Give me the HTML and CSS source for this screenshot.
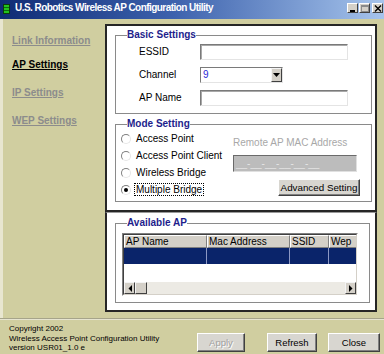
FILE: index.html
```html
<!DOCTYPE html>
<html>
<head>
<meta charset="utf-8">
<link rel="stylesheet" href="styles.css">
</head>
<body>
<div class="window">
  <div class="titlebar">
    <svg class="appicon" width="7" height="10" viewBox="0 0 7 10">
      <rect x="0.5" y="0.5" width="6" height="9" fill="#22c41e" stroke="#0b3d0b"/>
      <rect x="1" y="3" width="5" height="1" fill="#0e6a0e"/>
      <rect x="1" y="6" width="5" height="1" fill="#0e6a0e"/>
    </svg>
    <span class="title">U.S. Robotics Wireless AP Configuration Utility</span>
    <div class="ctrls">
      <span class="cbtn"><svg width="8" height="7" viewBox="0 0 8 7"><rect x="1" y="5" width="5" height="2" fill="#000"/></svg></span>
      <span class="cbtn"><svg width="8" height="7" viewBox="0 0 8 7"><rect x="0.5" y="0.5" width="7" height="6" fill="none" stroke="#8a8a8a"/><rect x="0" y="0" width="8" height="2" fill="#8a8a8a"/></svg></span>
      <span class="cbtn close"><svg width="8" height="7" viewBox="0 0 8 7"><path d="M1 0.5 L7 6.5 M7 0.5 L1 6.5" stroke="#000" stroke-width="1.4"/></svg></span>
    </div>
  </div>

  <div class="main">
    <nav class="nav">
      <a class="navlink first">Link Information</a>
      <a class="navlink active">AP Settings</a>
      <a class="navlink">IP Settings</a>
      <a class="navlink">WEP Settings</a>
    </nav>

    <div class="panels">
      <div class="panel panel-top">
        <fieldset class="group basic">
          <legend>Basic Settings</legend>
          <div class="form">
            <span class="lbl">ESSID</span>
            <span class="input wide"></span>
            <span class="lbl">Channel</span>
            <span class="select">
              <span class="sel-val">9</span>
              <span class="sel-btn"><svg width="7" height="4" viewBox="0 0 7 4"><path d="M0 0 H7 L3.5 4 Z" fill="#000"/></svg></span>
            </span>
            <span class="lbl">AP Name</span>
            <span class="input wide"></span>
          </div>
        </fieldset>

        <fieldset class="group mode">
          <legend>Mode Setting</legend>
          <div class="mode-body">
            <div class="radios">
              <div class="radio-row"><span class="radio"></span><span>Access Point</span></div>
              <div class="radio-row"><span class="radio"></span><span>Access Point Client</span></div>
              <div class="radio-row"><span class="radio"></span><span>Wireless Bridge</span></div>
              <div class="radio-row"><span class="radio on"></span><span class="focus">Multiple Bridge</span></div>
            </div>
            <div class="remote">
              <span class="remote-label">Remote AP MAC Address</span>
              <span class="mac">__-__-__-__-__-__</span>
              <button class="btn adv">Advanced Setting</button>
            </div>
          </div>
        </fieldset>
      </div>

      <div class="panel panel-bottom">
        <fieldset class="group avail">
          <legend>Available AP</legend>
          <div class="listview">
            <div class="lv-inner">
              <div class="lv-head">
                <span class="col c1">AP Name</span>
                <span class="col c2">Mac Address</span>
                <span class="col c3">SSID</span>
                <span class="col c4">Wep</span>
              </div>
              <div class="lv-row">
                <span class="cell c1"></span>
                <span class="cell c2"></span>
                <span class="cell c3"></span>
                <span class="cell c4"></span>
              </div>
              <div class="lv-empty"></div>
              <div class="hscroll">
                <span class="sbtn"><svg width="4" height="7" viewBox="0 0 4 7"><path d="M4 0 V7 L0.5 3.5 Z" fill="#000"/></svg></span>
                <span class="thumb"></span>
                <span class="track"></span>
                <span class="sbtn"><svg width="4" height="7" viewBox="0 0 4 7"><path d="M0 0 V7 L3.5 3.5 Z" fill="#000"/></svg></span>
              </div>
            </div>
          </div>
        </fieldset>
      </div>
    </div>
  </div>

  <div class="footer">
    <div class="info">
      <div>Copyright 2002</div>
      <div>Wireless Access Point Configuration Utility</div>
      <div>version USR01_1.0 e</div>
    </div>
    <div class="buttons">
      <button class="btn fbtn apply" disabled>Apply</button>
      <button class="btn fbtn refresh">Refresh</button>
      <button class="btn fbtn closeb">Close</button>
    </div>
  </div>
</div>
</body>
</html>
```

FILE: styles.css
```css
* { box-sizing: border-box; }

body {
  margin: 0;
  font-family: "Liberation Sans", Arial, sans-serif;
  font-size: 10px;
  color: #000;
}

.window {
  width: 384px;
  height: 354px;
  background: #d0cea0;
  display: flex;
  flex-direction: column;
  overflow: hidden;
}

/* title bar */
.titlebar {
  height: 19px;
  flex: none;
  background: linear-gradient(to right, #0f2b74 0%, #3d62ad 45%, #a6c4ec 100%);
  display: flex;
  align-items: flex-start;
  padding: 2px 1px 0 3px;
}
.appicon { margin-top: 2px; flex: none; }
.title {
  color: #fff;
  font-weight: bold;
  font-size: 10px;
  letter-spacing: -0.55px;
  line-height: 12px;
  margin-left: 5px;
  white-space: nowrap;
}
.ctrls {
  margin-left: auto;
  display: flex;
  gap: 1px;
  margin-top: 1px;
}
.cbtn {
  width: 11px;
  height: 10px;
  background: #d4d0c8;
  border: 1px solid;
  border-color: #fff #404040 #404040 #fff;
  display: flex;
  align-items: center;
  justify-content: center;
}
.cbtn.close { margin-left: 1px; }

/* main area */
.main {
  height: 299px;
  flex: none;
  display: flex;
}

.nav {
  width: 105px;
  flex: none;
  border-left: 3px solid #e8e6d0;
  padding: 16px 0 0 9px;
  display: flex;
  flex-direction: column;
  gap: 16px;
}
.navlink {
  font-weight: bold;
  font-size: 10px;
  line-height: 12px;
  color: #8c8c8c;
  text-decoration: underline;
  white-space: nowrap;
}
.navlink.first { margin-bottom: -4px; }
.navlink.active { color: #000; }

.panels {
  width: 272px;
  flex: none;
  padding-top: 5px;
  display: flex;
  flex-direction: column;
}

.panel { background: #fff; }

.panel-top {
  height: 188px;
  border: 2px solid #262626;
  padding: 3px 3px 0 8px;
}

.panel-bottom {
  height: 100px;
  border: 2px solid #262626;
  border-top: 1px solid #9a9a9a;
  padding: 4px 5px 0 8px;
}

/* group boxes */
.group {
  margin: 0;
  padding: 0;
  border: 1px solid #8a8a8a;
  min-width: 0;
}
.group legend {
  padding: 0;
  margin-left: 11px;
  color: #1e1e8c;
  font-weight: bold;
  font-size: 10px;
  line-height: 12px;
}

.form {
  display: grid;
  grid-template-columns: 61px auto;
  row-gap: 7px;
  align-items: center;
  justify-items: start;
  padding: 3px 0 7px 23px;
}
.lbl { line-height: 12px; }

.input {
  height: 16px;
  background: #fff;
  border: 1px solid;
  border-color: #7a7a7a #e4e4e4 #e4e4e4 #7a7a7a;
  box-shadow: inset 1px 1px 0 #a8a8a8;
}
.input.wide { width: 148px; }

.select {
  width: 83px;
  height: 16px;
  display: flex;
  background: #fff;
  border: 1px solid;
  border-color: #7a7a7a #e4e4e4 #e4e4e4 #7a7a7a;
}
.sel-val {
  flex: 1;
  color: #2a2ad6;
  line-height: 14px;
  padding-left: 2px;
}
.sel-btn {
  width: 11px;
  height: 14px;
  background: #d4d0c8;
  border: 1px solid;
  border-color: #f4f4f4 #404040 #404040 #f4f4f4;
  display: flex;
  align-items: center;
  justify-content: center;
}

.mode { margin-top: 4px; }
.mode-body {
  display: flex;
  padding: 0 0 3px 5px;
}
.radios {
  width: 112px;
  flex: none;
  display: flex;
  flex-direction: column;
}
.radio-row {
  height: 17px;
  display: flex;
  align-items: center;
  gap: 5px;
  white-space: nowrap;
}
.radio {
  width: 10px;
  height: 10px;
  border-radius: 50%;
  border: 1px solid;
  border-color: #808080 #e6e6e6 #e6e6e6 #808080;
  background: #fff;
  display: flex;
  align-items: center;
  justify-content: center;
  flex: none;
}
.radio.on::after {
  content: "";
  width: 4px;
  height: 4px;
  border-radius: 50%;
  background: #000;
}
.focus {
  outline: 1px dotted #000;
  padding: 0 1px;
  margin-left: -1px;
  line-height: 11px;
}

.remote {
  flex: 1;
  padding-top: 7px;
  display: flex;
  flex-direction: column;
  align-items: flex-start;
}
.remote-label {
  color: #a8a8a8;
  line-height: 12px;
  white-space: nowrap;
}
.mac {
  margin-top: 6px;
  width: 124px;
  height: 17px;
  background: #bcbcbc;
  border: 1px solid;
  border-color: #6a6a6a #e0e0e0 #e0e0e0 #6a6a6a;
  color: #e6e6e6;
  line-height: 15px;
  padding-left: 2px;
  white-space: nowrap;
}

.btn {
  font-family: "Liberation Sans", Arial, sans-serif;
  font-size: 10px;
  color: #000;
  background: #d8d6d0;
  border: 1px solid;
  border-color: #fff #404040 #404040 #fff;
  box-shadow: inset -1px -1px 0 #808080;
  padding: 0;
  margin: 0;
  display: flex;
  align-items: center;
  justify-content: center;
  white-space: nowrap;
}
.adv {
  margin-top: 7px;
  margin-left: 45px;
  width: 82px;
  height: 17px;
  font-size: 9.8px;
}

/* list view */
.avail .listview {
  margin: 4px 0 6px 6px;
  width: 236px;
  height: 63px;
  border: 1px solid;
  border-color: #808080 #fff #fff #808080;
}
.lv-inner {
  width: 100%;
  height: 100%;
  border: 1px solid;
  border-color: #404040 #d4d0c8 #d4d0c8 #404040;
  background: #fff;
  overflow: hidden;
  display: flex;
  flex-direction: column;
}
.lv-head {
  height: 13px;
  flex: none;
  display: flex;
}
.lv-head .col {
  flex: none;
  height: 13px;
  background: #d4d0c8;
  border: 1px solid;
  border-color: #fff #808080 #808080 #fff;
  box-shadow: 1px 0 0 #404040;
  line-height: 11px;
  padding-left: 1px;
  white-space: nowrap;
}
.c1 { width: 83px; }
.c2 { width: 83px; }
.c3 { width: 39px; }
.c4 { width: 40px; }

.lv-row {
  height: 16px;
  flex: none;
  display: flex;
  background: #0a246a;
}
.lv-row .cell {
  flex: none;
  height: 16px;
  border-right: 1px solid #8c98c4;
}
.lv-empty { height: 18px; flex: none; }

.hscroll {
  height: 12px;
  flex: none;
  display: flex;
  background: #eceae4;
}
.sbtn {
  width: 11px;
  height: 12px;
  flex: none;
  background: #d4d0c8;
  border: 1px solid;
  border-color: #f4f4f4 #404040 #404040 #f4f4f4;
  display: flex;
  align-items: center;
  justify-content: center;
}
.thumb {
  width: 12px;
  height: 12px;
  flex: none;
  background: #d4d0c8;
  border: 1px solid;
  border-color: #f4f4f4 #404040 #404040 #f4f4f4;
}
.track { flex: 1; }

/* footer */
.footer {
  flex: 1;
  display: flex;
  align-items: flex-start;
  border-top: 1px solid #a6a48a;
  box-shadow: inset 0 1px 0 #e6e4d0;
}
.info {
  padding: 5px 0 0 9px;
  font-size: 8px;
  line-height: 9.5px;
  white-space: nowrap;
}
.buttons {
  margin-left: auto;
  padding: 14px 4px 0 0;
  display: flex;
}
.fbtn {
  height: 19px;
  font-size: 9.5px;
}
.apply { width: 48px; color: #a0a0a0; text-shadow: 1px 1px 0 #fff; }
.refresh { width: 50px; margin-left: 22px; }
.closeb { width: 52px; margin-left: 11px; }
```
